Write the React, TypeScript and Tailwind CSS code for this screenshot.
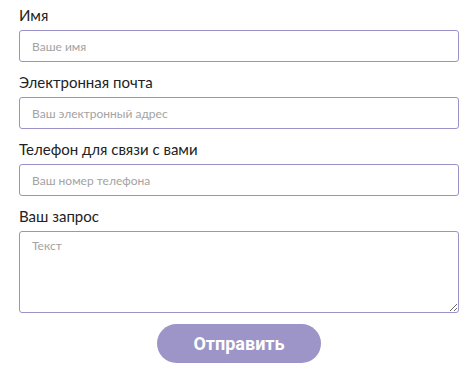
import { useState } from 'react';

const fields = [
  { label: 'Имя', placeholder: 'Ваше имя', type: 'text' },
  { label: 'Электронная почта', placeholder: 'Ваш электронный адрес', type: 'email' },
  { label: 'Телефон для связи с вами', placeholder: 'Ваш номер телефона', type: 'tel' },
];

export default function App() {
  const [values, setValues] = useState<Record<string, string>>({});

  return (
    <div className="bg-white min-h-screen pt-[4px] font-['Lato','Noto_Sans',sans-serif]">
      <form className="w-[440px] ml-[19px] flex flex-col" onSubmit={e => e.preventDefault()}>
        {fields.map(f => (
          <div key={f.label} className="flex flex-col mb-[9px]">
            <label className="text-[15px] leading-[22px] text-[#222] mb-[4px]">{f.label}</label>
            <input
              type={f.type}
              placeholder={f.placeholder}
              value={values[f.label] || ''}
              onChange={e => setValues({ ...values, [f.label]: e.target.value })}
              className="h-[32px] border border-[#9b92c9] rounded-[3px] px-[12px] text-[12px] outline-none placeholder:text-[#a3a3a3]"
            />
          </div>
        ))}

        <div className="flex flex-col">
          <label className="text-[15px] leading-[22px] text-[#222] mb-[4px]">Ваш запрос</label>
          <textarea
            placeholder="Текст"
            className="h-[82px] border border-[#9b92c9] rounded-[3px] px-[12px] py-[5px] text-[12px] outline-none placeholder:text-[#a3a3a3]"
          />
        </div>

        <div className="flex justify-center mt-[11px]">
          <button
            type="submit"
            className="w-[164px] h-[39px] rounded-full bg-[#9d95c7] text-white text-[18px] font-bold font-['Roboto',sans-serif]"
          >
            Отправить
          </button>
        </div>
      </form>
    </div>
  );
}
